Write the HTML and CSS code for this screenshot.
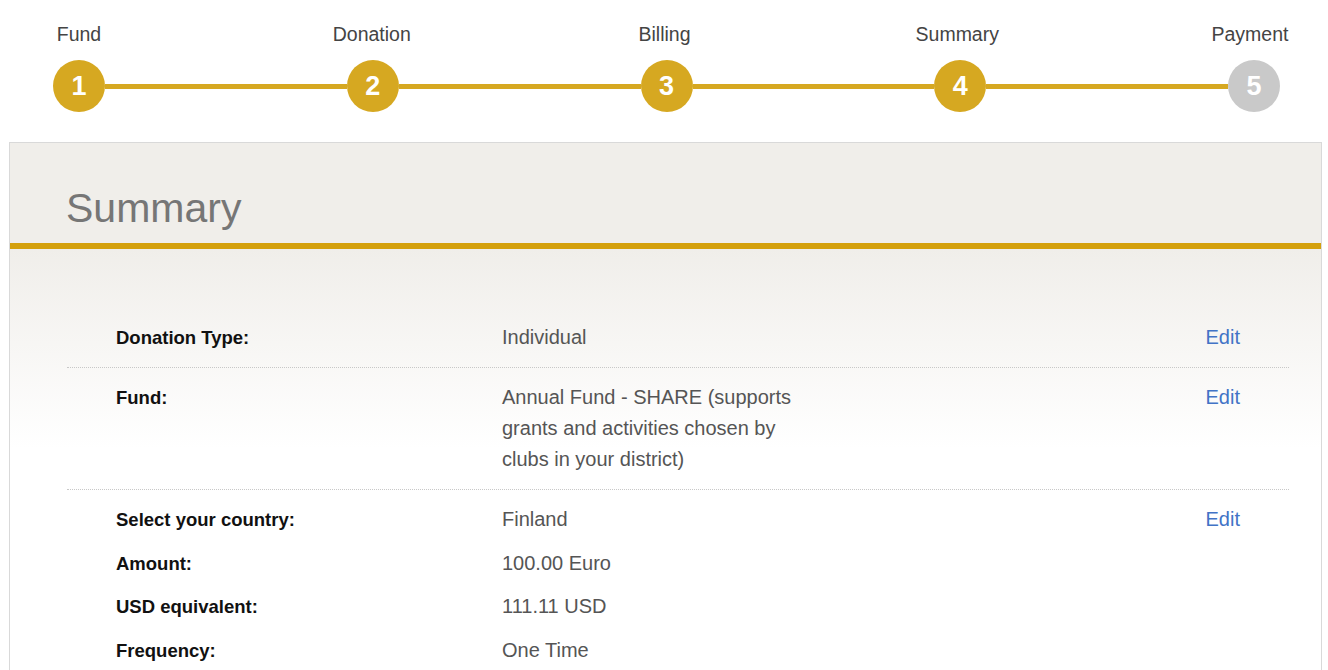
FILE: index.html
```html
<!DOCTYPE html>
<html lang="en">
<head>
    <meta charset="UTF-8">
    <meta name="viewport" content="width=device-width, initial-scale=1.0">
    <title>Donation Summary</title>
    <link rel="stylesheet" href="styles.css">
</head>
<body>

    <!-- Progress steps -->
    <div class="steps">
        <div class="step-labels">
            <span class="step-label">Fund</span>
            <span class="step-label">Donation</span>
            <span class="step-label">Billing</span>
            <span class="step-label">Summary</span>
            <span class="step-label">Payment</span>
        </div>
        <div class="step-track">
            <span class="step-dot done">1</span>
            <span class="step-line"></span>
            <span class="step-dot done">2</span>
            <span class="step-line"></span>
            <span class="step-dot done">3</span>
            <span class="step-line"></span>
            <span class="step-dot done">4</span>
            <span class="step-line"></span>
            <span class="step-dot">5</span>
        </div>
    </div>

    <!-- Summary panel -->
    <div class="panel">
        <div class="panel-head">
            <h1>Summary</h1>
        </div>
        <div class="panel-body">
            <div class="group">
                <div class="row">
                    <span class="label">Donation Type:</span>
                    <span class="value">Individual</span>
                    <a class="edit" href="#">Edit</a>
                </div>
            </div>
            <div class="group">
                <div class="row">
                    <span class="label">Fund:</span>
                    <span class="value">Annual Fund - SHARE (supports grants and activities chosen by clubs in your district)</span>
                    <a class="edit" href="#">Edit</a>
                </div>
            </div>
            <div class="group plain">
                <div class="row">
                    <span class="label">Select your country:</span>
                    <span class="value">Finland</span>
                    <a class="edit" href="#">Edit</a>
                </div>
                <div class="row">
                    <span class="label">Amount:</span>
                    <span class="value">100.00 Euro</span>
                </div>
                <div class="row">
                    <span class="label">USD equivalent:</span>
                    <span class="value">111.11 USD</span>
                </div>
                <div class="row">
                    <span class="label">Frequency:</span>
                    <span class="value">One Time</span>
                </div>
            </div>
        </div>
    </div>

</body>
</html>
```

FILE: styles.css
```css
body {
    margin: 0;
    font-family: "Liberation Sans", Arial, sans-serif;
    background: #fff;
}

/* steps */
.steps {
    padding: 23px 48px 0 53px;
}
.step-labels {
    display: flex;
    justify-content: space-between;
    margin: 0 -20px 0 -24px;
}
.step-label {
    width: 100px;
    text-align: center;
    font-size: 19.5px;
    line-height: 22px;
    color: #444;
}
.step-track {
    display: flex;
    align-items: center;
    margin-top: 15px;
}
.step-dot {
    width: 52px;
    height: 52px;
    border-radius: 50%;
    background: #c9c9c9;
    color: #fff;
    font-weight: bold;
    font-size: 27px;
    display: flex;
    align-items: center;
    justify-content: center;
    flex-shrink: 0;
}
.step-dot.done {
    background: #d6a821;
}
.step-line {
    flex: 1;
    height: 5px;
    background: #d6a821;
}

/* panel */
.panel {
    margin: 30px 6px 0 9px;
    border: 1px solid #d9d9d9;
    height: 560px;
}
.panel-head {
    background: #f0eeea;
    height: 100px;
    border-bottom: 6px solid #d4a00c;
    display: flex;
    align-items: flex-end;
    padding-left: 56px;
}
.panel-head h1 {
    margin: 0 0 11px;
    font-weight: normal;
    font-size: 41px;
    line-height: 47px;
    color: #767676;
}
.panel-body {
    background: linear-gradient(#f0eeea, #fff 200px);
    padding: 59px 32px 0 57px;
    height: 450px;
}

.group {
    border-bottom: 1px dotted #c8c8c8;
    padding: 14px 0 14px;
}
.group.plain {
    border-bottom: none;
    display: flex;
    flex-direction: column;
    gap: 12.5px;
}
.row {
    display: grid;
    grid-template-columns: 386px 310px 1fr auto;
    padding: 0 49px;
    font-size: 20px;
    line-height: 31px;
}
.label {
    font-weight: bold;
    font-size: 18.5px;
    color: #111;
}
.value {
    color: #555;
}
.edit {
    grid-column: 4;
    color: #4273c6;
    text-decoration: none;
}
```
